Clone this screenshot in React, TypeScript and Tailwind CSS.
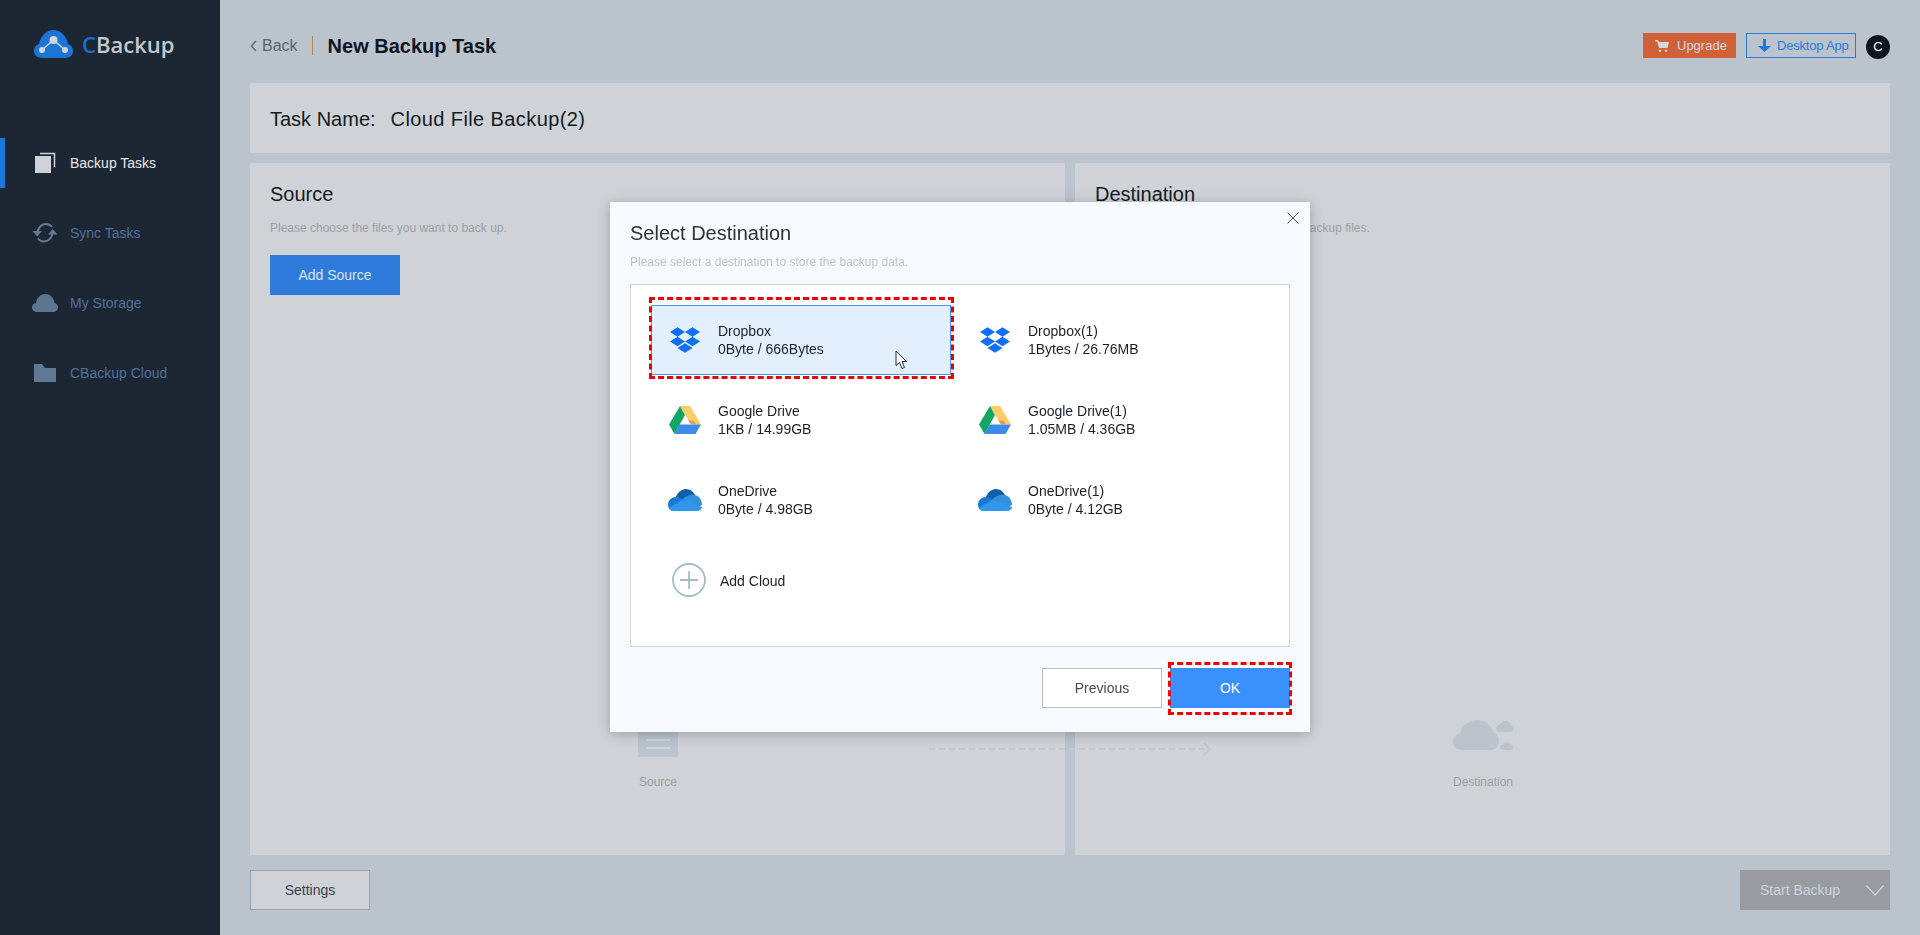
import { SiDropbox } from "react-icons/si";

function LogoIcon() {
  return (
    <svg width="39" height="28" viewBox="0 0 39 28">
      <path d="M8 28C3 28 0 25 0 21c0-3.500 2-6 5-7C6.500 6 12.500 0 19.500 0S32.500 6 34 14c3 1 5 3.500 5 7 0 4-3 7-8 7Z" fill="#1b74d6" />
      <path d="M8 20 19.500 10 31 20" fill="none" stroke="#cfd5dc" strokeWidth="1.600" />
      <circle cx="19.500" cy="10" r="4" fill="#cfd5dc" />
      <circle cx="8" cy="20" r="3" fill="#cfd5dc" />
      <circle cx="31" cy="20" r="3" fill="#cfd5dc" />
    </svg>
  );
}

function BackupIcon() {
  return (
    <svg width="26" height="22" viewBox="0 0 26 22">
      <rect x="3" y="4" width="16" height="17" fill="#cfd3d8" />
      <path d="M8 1.500H22.500V15" fill="none" stroke="#cfd3d8" strokeWidth="1.500" />
    </svg>
  );
}

function SyncIcon() {
  return (
    <svg width="26" height="22" viewBox="0 0 26 22" fill="none">
      <path d="M5.500 10.500C6 5 10 2 14 2c2.500 0 4.500 1 6 3" stroke="#667a90" strokeWidth="2" />
      <path d="M0.500 9H10l-4.800 5.500Z" fill="#667a90" />
      <path d="M20.500 11c-.5 5.500-4.500 8.500-8.500 8.500-2.500 0-4.500-1-6-3" stroke="#667a90" strokeWidth="2" />
      <path d="M16 12.500h9.500L20.800 7Z" fill="#667a90" />
    </svg>
  );
}

function StorageIcon() {
  return (
    <svg width="26" height="18" viewBox="0 0 26 18">
      <path d="M5 18C2 18 0 16 0 13.500 0 11 1.500 9.500 4 9 4.500 4 8.500 0 13.500 0S22 4 22.500 9c2 .5 3.500 2 3.500 4.500S24 18 21 18Z" fill="#5c7692" />
    </svg>
  );
}

function FolderIcon() {
  return (
    <svg width="22" height="18" viewBox="0 0 22 18">
      <path d="M0 0H8L11 4H22V18H0Z" fill="#5f7894" />
    </svg>
  );
}

function CartIcon() {
  return (
    <svg width="14" height="12" viewBox="0 0 14 12" fill="#d5d9dd">
      <path d="M0 0H3L4 2H14L12.500 8H4L2.300 1.500H0Z" />
      <circle cx="5" cy="10.800" r="1.200" />
      <circle cx="11" cy="10.800" r="1.200" />
    </svg>
  );
}

function DownloadIcon() {
  return (
    <svg width="13" height="14" viewBox="0 0 13 14" fill="#1f78dd">
      <path d="M5 0H8V7H13L6.500 13 0 7H5Z" />
    </svg>
  );
}

function DriveIcon() {
  return (
    <svg width="32" height="28" viewBox="0 0 32 28">
      <polygon points="11,0 21,0 32,18.500 22,18.500" fill="#ffcc66" />
      <polygon points="11,0 16,9 5.500,28 0,18.500" fill="#13a663" />
      <polygon points="10.500,18.500 32,18.500 26.500,28 5.500,28" fill="#3a8bea" />
      <polygon points="19,14 22,18.500 27,18.500 25,15" fill="#d9a066" />
    </svg>
  );
}

function OneDriveIcon() {
  return (
    <svg width="34" height="22" viewBox="0 0 34 22">
      <path d="M8 8C10 2 15 0 18 0c4 0 7 2 9 6l-7 8Z" fill="#0f5fa8" />
      <path d="M6 22C2 22 0 19 0 15.500 0 11 4 8 8 8c3 0 6 1 8 3l8 11Z" fill="#1a79d3" />
      <path d="M14 11c3-4 8-6 13-5 4 1 7 5 7 10l-8 4Z" fill="#3390dd" />
      <path d="M6 22C3 22 1 20 1 19l13-8 20 7c0 2-2 4-5 4Z" fill="#2f97ec" />
    </svg>
  );
}

function GhostCloud() {
  return (
    <svg width="60" height="30" viewBox="0 0 60 30" fill="#bbc3cd">
      <path d="M9 30C4 30 0 27 0 22 0 17 4 14 7 13 9 5 15 0 25 0c7 0 13 5 15 12 4 1 6 5 6 9 0 5-3 9-8 9Z" />
      <path d="M47 12a3.500 3.500 0 0 1-.5-7C47.500 3 50 1 52.500 1c3 0 5 2 5.500 4.500 1.500 0 2 1.500 2 3S59 12 57 12Z" />
      <path d="M50 30c-2 0-3-1-3-2.500S48 25 49.500 25C50 23 52 22 54 22c2 0 3 1 3.500 3 1.500 0 2.500 1 2.500 2.500S59 30 57 30Z" />
    </svg>
  );
}

const navItems = [
  { label: "Backup Tasks", icon: <BackupIcon />, active: true },
  { label: "Sync Tasks", icon: <SyncIcon />, active: false },
  { label: "My Storage", icon: <StorageIcon />, active: false },
  { label: "CBackup Cloud", icon: <FolderIcon />, active: false },
];

const clouds = [
  { name: "Dropbox", usage: "0Byte / 666Bytes", icon: <SiDropbox size={30} color="#0f6ff5" />, selected: true },
  { name: "Dropbox(1)", usage: "1Bytes / 26.76MB", icon: <SiDropbox size={30} color="#0f6ff5" />, selected: false },
  { name: "Google Drive", usage: "1KB / 14.99GB", icon: <DriveIcon />, selected: false },
  { name: "Google Drive(1)", usage: "1.05MB / 4.36GB", icon: <DriveIcon />, selected: false },
  { name: "OneDrive", usage: "0Byte / 4.98GB", icon: <OneDriveIcon />, selected: false },
  { name: "OneDrive(1)", usage: "0Byte / 4.12GB", icon: <OneDriveIcon />, selected: false },
];

function Sidebar() {
  return (
    <aside className="w-[220px] shrink-0 bg-[#1d2733]">
      <div className="flex h-[138px] items-start gap-[9px] pl-[34px] pt-[30px]">
        <LogoIcon />
        <div className="-mt-[1px] font-['Open_Sans',sans-serif] text-[22px] leading-[30px] font-semibold text-[#c2c8d0]">
          <span className="text-[#1b6fd2]">C</span>Backup
        </div>
      </div>
      <nav className="flex flex-col gap-[20px]">
        {navItems.map((item) => (
          <div
            key={item.label}
            className={`flex h-[50px] items-center border-l-[5px] pl-[27px] text-[14px] ${item.active ? "border-[#1a78dd] text-[#e6e8ea]" : "border-transparent text-[#4f719e]"}`}
          >
            <span className="flex w-[26px] justify-center">{item.icon}</span>
            <span className="ml-[12px]">{item.label}</span>
          </div>
        ))}
      </nav>
    </aside>
  );
}

function Header() {
  return (
    <header className="flex h-[83px] items-center pt-[8px]">
      <svg width="7" height="12" viewBox="0 0 7 12" fill="none">
        <path d="M6 1 1.500 6 6 11" stroke="#5c6670" strokeWidth="1.400" />
      </svg>
      <span className="ml-[5px] text-[16px] text-[#5a6470]">Back</span>
      <span className="ml-[14px] h-[19px] w-[1px] bg-[#b08a45]" />
      <h1 className="ml-[15px] text-[20px] font-bold text-[#0e1520]">New Backup Task</h1>
      <div className="ml-auto flex items-center gap-[10px]">
        <button className="flex h-[25px] w-[93px] items-center bg-[#d06038] pl-[12px] text-[13px] text-[#d5d9dd]">
          <CartIcon />
          <span className="ml-[8px]">Upgrade</span>
        </button>
        <button className="flex h-[25px] w-[110px] items-center border border-[#2a7ad7] pl-[11px] text-[13px] tracking-[-0.2px] text-[#2a7bd9]">
          <DownloadIcon />
          <span className="ml-[6px]">Desktop App</span>
        </button>
        <div className="mt-[2px] flex h-[24px] w-[24px] items-center justify-center rounded-full bg-[#10161f] text-[13px] text-white">C</div>
      </div>
    </header>
  );
}

function SelectDestinationDialog() {
  return (
    <div className="fixed inset-0 flex items-center justify-center pb-[1px]">
      <div className="relative h-[530px] w-[700px] bg-[#f6fafd] px-[20px] pt-[19px] shadow-[0_2px_12px_rgba(0,0,0,0.25)]">
        <svg className="absolute right-[11px] top-[10px]" width="12" height="12" viewBox="0 0 12 12" fill="none">
          <path d="M.5.5 11.500 11.500M11.500.5.5 11.500" stroke="#555c64" strokeWidth="1" />
        </svg>
        <h2 className="text-[20px] leading-[24px] text-[#2c333a]">Select Destination</h2>
        <p className="mt-[9px] text-[12px] leading-[16px] text-[#bcc2c9]">Please select a destination to store the backup data.</p>
        <div className="mt-[14px] grid h-[363px] grid-cols-[300px_300px] content-start gap-[10px] border border-[#d0d5da] bg-white pl-[20px] pt-[20px]">
          {clouds.map((cloud) => (
            <div
              key={cloud.name}
              className={`relative flex h-[70px] items-center border pl-[13px] text-[14px] leading-[18px] text-[#1a2028] ${cloud.selected ? "border-[#4b97f0] bg-[#e2f0fd]" : "border-transparent"}`}
            >
              <span className="flex w-[40px] justify-center">{cloud.icon}</span>
              <div className="ml-[13px]">
                <div>{cloud.name}</div>
                <div>{cloud.usage}</div>
              </div>
              {cloud.selected && (
                <>
                  <div className="absolute -bottom-[5px] -left-[3px] -right-[4px] -top-[9px] border-[3px] border-dashed border-[#f00000]" />
                  <svg className="absolute left-[243px] top-[44px]" width="13" height="20" viewBox="0 0 13 20">
                    <path d="M1 1V15.500L4.500 12.500 7 18.500 9.500 17.500 7 11.500H11.500Z" fill="#fff" stroke="#222b33" strokeWidth="1" />
                  </svg>
                </>
              )}
            </div>
          ))}
          <div className="flex h-[70px] items-center pl-[21px] text-[14px] text-[#1a2028]">
            <svg width="34" height="34" viewBox="0 0 34 34" fill="none" stroke="#a3bccb" strokeWidth="1.800">
              <circle cx="17" cy="17" r="16" />
              <path d="M17 8V26M8 17H26" />
            </svg>
            <span className="ml-[14px] mt-[3px]">Add Cloud</span>
          </div>
        </div>
        <div className="mt-[21px] flex justify-end gap-[8px]">
          <button className="h-[40px] w-[120px] border border-[#b9bfc6] bg-white text-[14px] text-[#444b53]">Previous</button>
          <div className="relative">
            <button className="h-[40px] w-[120px] bg-[#3a91fb] text-[14px] text-white">OK</button>
            <div className="absolute -bottom-[7px] -left-[2px] -right-[2px] -top-[6px] border-[3px] border-dashed border-[#f00000]" />
          </div>
        </div>
      </div>
    </div>
  );
}

export default function App() {
  return (
    <div className="flex h-screen font-['Liberation_Sans',sans-serif] bg-[#bbc3cd]">
      <Sidebar />
      <main className="flex min-w-0 flex-1 flex-col px-[30px]">
        <Header />
        <section className="flex h-[70px] items-center bg-[#cfd3d8] pl-[20px] pt-[1px] text-[20px] text-[#131a22]">
          <span>Task Name:</span>
          <span className="ml-[15px] tracking-[0.4px]">Cloud File Backup(2)</span>
        </section>
        <div className="relative mt-[10px] flex h-[692px] gap-[10px]">
          <section className="flex flex-1 flex-col bg-[#cfd3d8] px-[20px] pb-[64px] pt-[19px]">
            <h2 className="text-[20px] leading-[24px] text-[#131a22]">Source</h2>
            <p className="mt-[14px] text-[12px] leading-[16px] text-[#9a9fa5]">Please choose the files you want to back up.</p>
            <button className="mt-[19px] h-[40px] w-[130px] bg-[#2e7bdb] text-[14px] text-[#dbe5f0]">Add Source</button>
            <div className="ml-[368px] mt-auto flex w-[40px] flex-col items-center">
              <div className="flex h-[40px] w-[40px] flex-col justify-end gap-[6px] bg-[#bbc3cd] px-[8px] pb-[8px]">
                <div className="h-[2px] bg-[#cfd3d8]" />
                <div className="h-[2px] bg-[#cfd3d8]" />
              </div>
              <div className="mt-[16px] text-[12px] leading-[18px] text-[#9a9ea4]">Source</div>
            </div>
          </section>
          <section className="flex flex-1 flex-col bg-[#cfd3d8] px-[20px] pb-[64px] pt-[19px]">
            <h2 className="text-[20px] leading-[24px] text-[#131a22]">Destination</h2>
            <p className="mt-[14px] text-[12px] leading-[16px] text-[#9a9fa5]">Please select a destination to save the backup files.</p>
            <div className="ml-[358px] mt-auto flex w-[60px] flex-col items-center">
              <GhostCloud />
              <div className="mt-[23px] text-[12px] leading-[18px] text-[#9a9ea4]">Destination</div>
            </div>
          </section>
          <svg className="absolute left-[679px] top-[578px]" width="284" height="16" viewBox="0 0 284 16" fill="none" stroke="#c3c8ce" strokeWidth="2">
            <path d="M0 8H280" strokeDasharray="6 4" />
            <path d="M275 2 281 8 275 14" />
          </svg>
        </div>
        <footer className="flex flex-1 items-start justify-between pt-[15px]">
          <button className="h-[40px] w-[120px] border border-[#9aa1a9] bg-[#cfd3d8] text-[14px] text-[#3a4148]">Settings</button>
          <button className="flex h-[40px] w-[150px] items-center bg-[#989ba0] pl-[20px] text-[14px] text-[#cdd5de]">
            <span>Start Backup</span>
            <svg className="ml-[26px]" width="18" height="11" viewBox="0 0 18 11" fill="none">
              <path d="M.5.5 9 10 17.500.5" stroke="#cdd5de" strokeWidth="1.200" />
            </svg>
          </button>
        </footer>
      </main>
      <SelectDestinationDialog />
    </div>
  );
}
